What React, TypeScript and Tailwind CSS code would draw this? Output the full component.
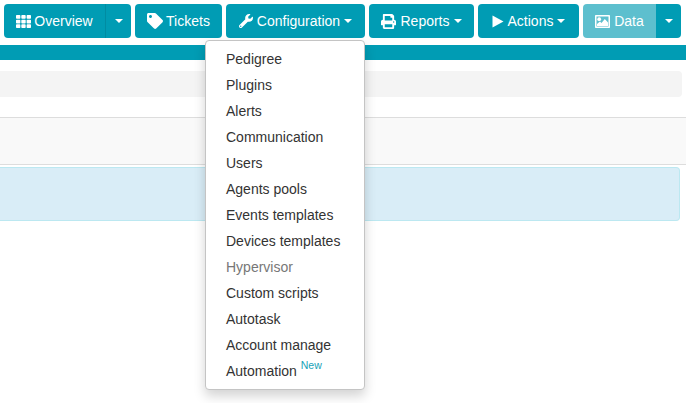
import { FaTh, FaTag, FaWrench, FaPrint } from "react-icons/fa";

const menuItems = [
  "Pedigree",
  "Plugins",
  "Alerts",
  "Communication",
  "Users",
  "Agents pools",
  "Events templates",
  "Devices templates",
  "Hypervisor",
  "Custom scripts",
  "Autotask",
  "Account manage",
];

function Caret() {
  return <span className="inline-block h-0 w-0 border-x-[4px] border-t-[4px] border-x-transparent border-t-white" />;
}

function PlayIcon() {
  return (
    <svg width="12" height="13" viewBox="0 0 12 13" fill="white">
      <path d="M0.5 0.5 L11.5 6.5 L0.5 12.5 Z" />
    </svg>
  );
}

function PictureIcon() {
  return (
    <svg width="15" height="13" viewBox="0 0 15 13" fill="white">
      <path
        fillRule="evenodd"
        d="M0.8 0 H14.2 Q15 0 15 0.8 V12.2 Q15 13 14.2 13 H0.8 Q0 13 0 12.2 V0.8 Q0 0 0.8 0 Z M1.5 1.5 V11.5 H13.5 V1.5 Z"
      />
      <circle cx="4.2" cy="4.2" r="1.9" />
      <path d="M2 11 V9 L5 6.5 L6.5 8 L9.8 4 L13 7.4 V11 Z" />
    </svg>
  );
}

function NavButton({ icon, label, caret, width, tight }: { icon: React.ReactNode; label: string; caret?: boolean; width: string; tight?: boolean }) {
  return (
    <div className={`flex h-[34px] items-center justify-center rounded-[4px] bg-[#009cb4] text-white ${tight ? "gap-[3px]" : "gap-[4px]"} ${width}`}>
      {icon}
      <span>{label}</span>
      {caret ? <Caret /> : null}
    </div>
  );
}

export default function App() {
  return (
    <div className="relative h-[403px] w-[686px] overflow-hidden bg-white font-['Liberation_Sans',Arial,sans-serif] text-[14px] leading-[20px]">
      <div className="flex gap-[4px] px-[4px] pt-[4px]">
        <div className="flex h-[34px] w-[127px] rounded-[4px] bg-[#009cb4] text-white">
          <div className="flex w-[101px] items-center justify-center gap-[3px]">
            <FaTh className="h-[15px] w-[15px]" />
            <span>Overview</span>
          </div>
          <div className="flex flex-1 items-center justify-center border-l border-[#008ca2]">
            <Caret />
          </div>
        </div>
        <NavButton icon={<FaTag className="h-[16px] w-[16px]" />} label="Tickets" width="w-[87px]" tight />
        <NavButton icon={<FaWrench className="h-[14px] w-[14px]" />} label="Configuration" caret width="w-[139px]" />
        <NavButton icon={<FaPrint className="h-[15px] w-[15px]" />} label="Reports" caret width="w-[105px]" />
        <NavButton icon={<PlayIcon />} label="Actions" caret width="w-[101px]" />
        <div className="flex h-[34px] w-[98px] overflow-hidden rounded-[4px] text-white">
          <div className="flex w-[73px] items-center justify-center gap-[4px] bg-[#5dbfce]">
            <PictureIcon />
            <span>Data</span>
          </div>
          <div className="flex flex-1 items-center justify-center bg-[#009cb4]">
            <Caret />
          </div>
        </div>
      </div>

      <div className="mt-[7px] h-[15px] bg-[#009cb4]" />
      <div className="mr-[4px] mt-[11px] h-[26px] rounded-r-[4px] bg-[#f4f4f4]" />
      <div className="mt-[20px] h-[48px] border-y border-[#dddddd] bg-[#f9f9f9]" />
      <div className="mr-[6px] mt-[2px] h-[54px] rounded-r-[4px] border-y border-r border-[#bce8f1] bg-[#d9edf7]" />

      <div className="absolute left-[205px] top-[40px] w-[160px] rounded-[4px] border border-[#c4c4c4] bg-white py-[5px] text-[#333333] shadow-[0_6px_12px_rgba(0,0,0,0.175)]">
        {menuItems.map((item) => (
          <div key={item} className={`h-[26px] whitespace-nowrap pl-[20px] pt-[3px] ${item === "Hypervisor" ? "text-[#777777]" : ""}`}>
            {item}
          </div>
        ))}
        <div className="h-[26px] whitespace-nowrap pl-[20px] pt-[3px]">
          Automation <sup className="relative top-[-7px] align-baseline text-[10.5px] leading-none text-[#17a2b8]">New</sup>
        </div>
      </div>
    </div>
  );
}
